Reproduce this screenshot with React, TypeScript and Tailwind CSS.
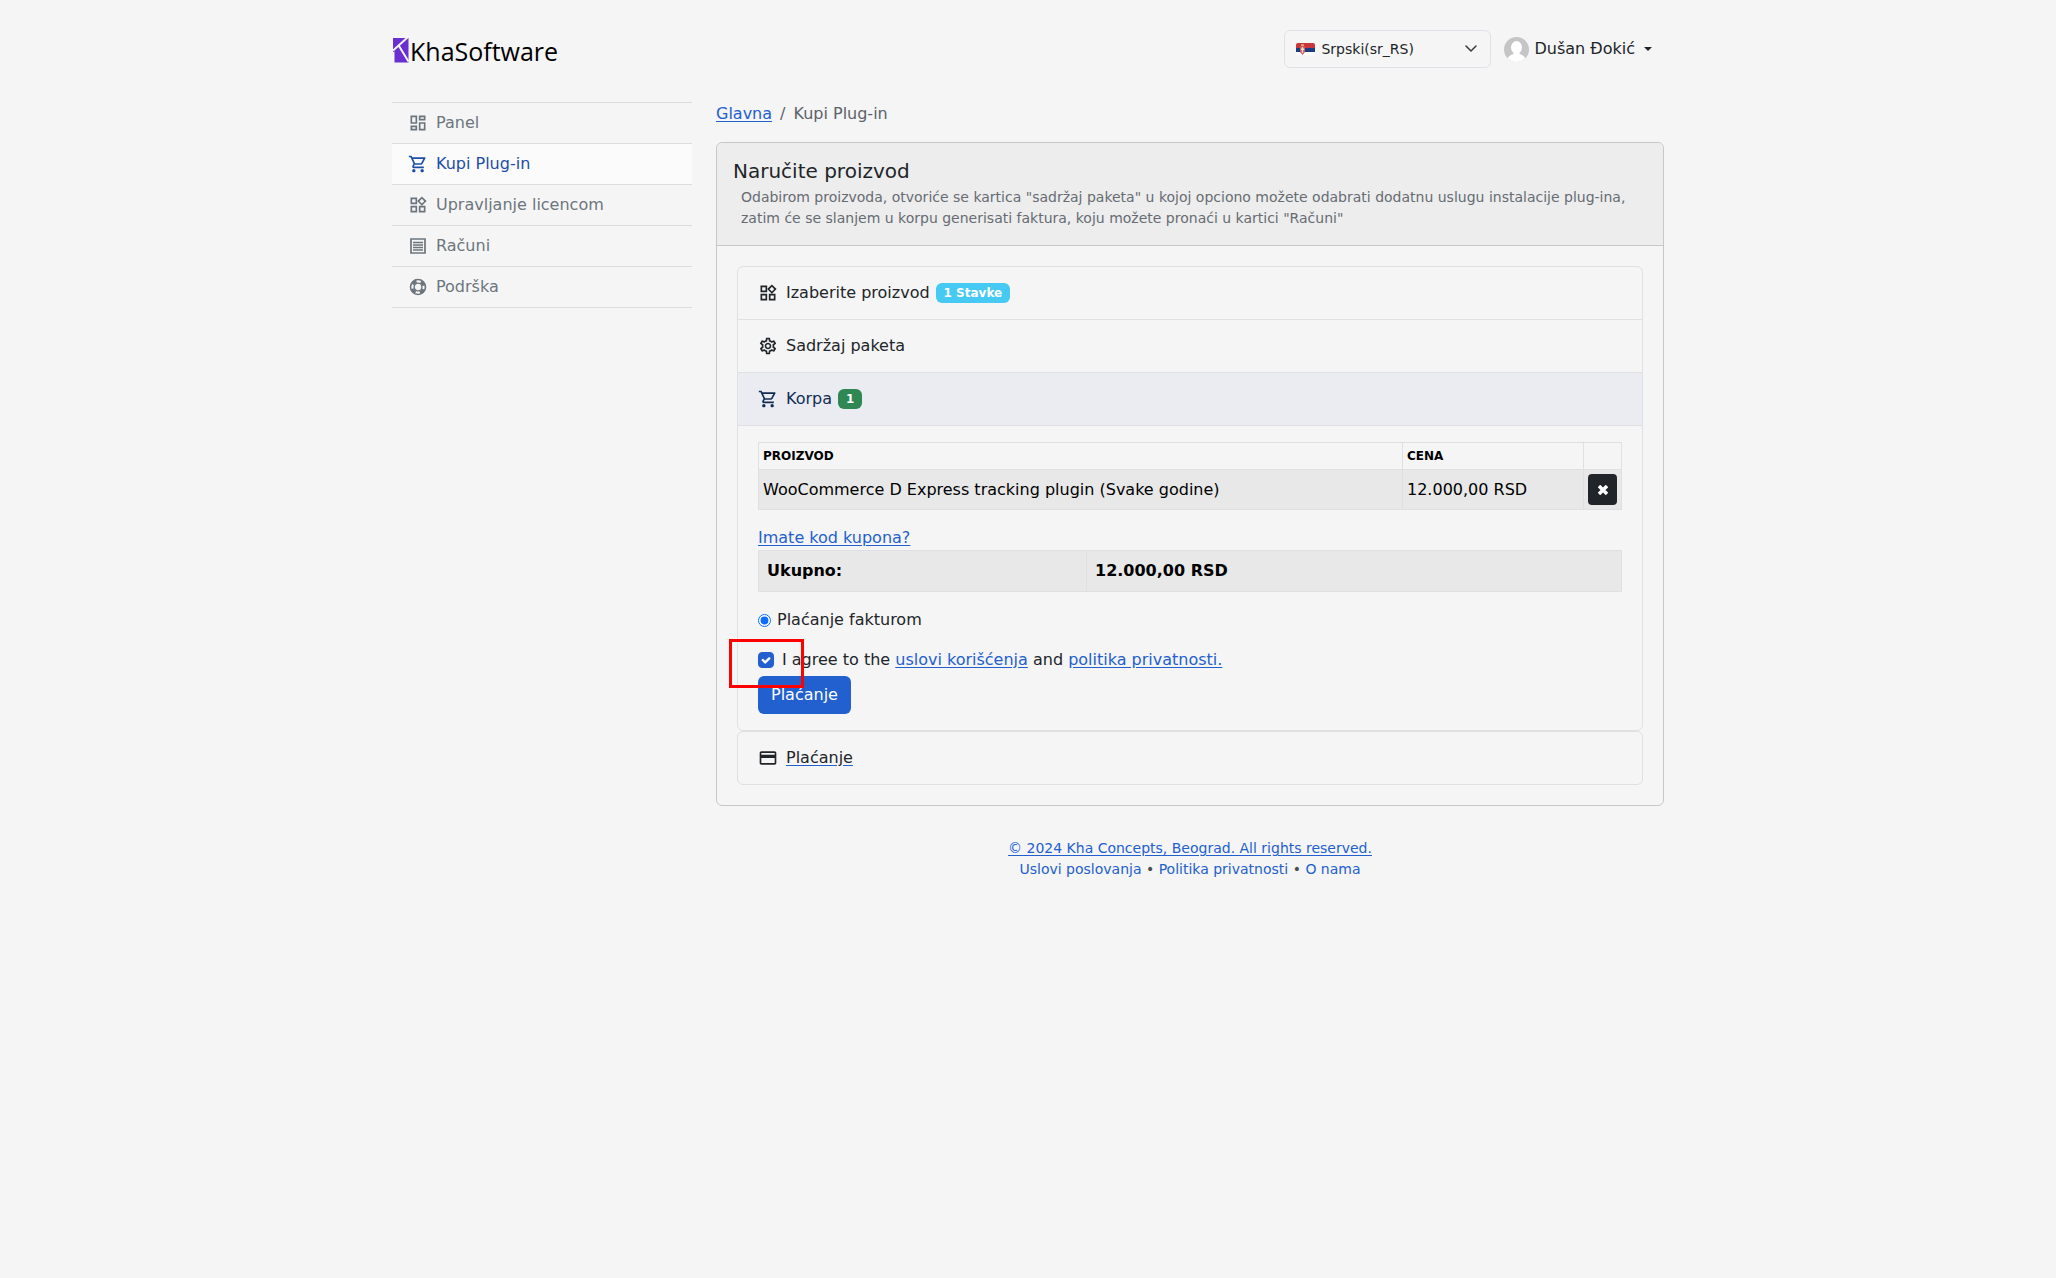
import type { ReactNode } from 'react';
import {
  MdOutlineCreditCard,
  MdOutlineDashboard,
  MdOutlineSettings,
  MdOutlineShoppingCart,
  MdOutlineWidgets,
} from 'react-icons/md';

const linkClass = 'text-[#2360cf] underline underline-offset-2';

function InvoiceIcon({ className }: { className?: string }) {
  return (
    <svg className={className} viewBox="0 0 20 20" fill="none" stroke="currentColor" aria-hidden="true">
      <path d="M3 3h14v14H3z" strokeWidth="1.7" />
      <path d="M5 6.500h10M5 9h10M5 11.500h10M5 14h10" strokeWidth="1.3" />
    </svg>
  );
}

function SupportIcon({ className }: { className?: string }) {
  return (
    <svg className={className} viewBox="0 0 20 20" fill="none" stroke="currentColor" aria-hidden="true">
      <circle cx="10" cy="10" r="7.500" strokeWidth="1.600" />
      <circle cx="10" cy="10" r="3.900" strokeWidth="1.400" />
      <circle cx="10" cy="10" r="6" strokeWidth="3.600" strokeDasharray="4.800 4.625" strokeDashoffset="-2.300" />
    </svg>
  );
}

function LogoMark() {
  return (
    <svg className="h-[25px] w-4" viewBox="0 0 16 25" aria-hidden="true">
      <path d="M0 0h15.500v24.500H1.500V13.500L0 14z" fill="#6a2fd0" />
      <path d="M14.500-.5 0 12.500M6 8l9.500 15.500" fill="none" stroke="#f5f5f5" strokeWidth="2" />
    </svg>
  );
}

function SerbianFlag() {
  return (
    <svg className="h-3 w-[19px]" viewBox="0 0 19 12" aria-hidden="true">
      <clipPath id="flag-shape">
        <rect width="19" height="12" rx="2" />
      </clipPath>
      <g clipPath="url(#flag-shape)">
        <path d="M0 0h19v5H0z" fill="#c6363c" />
        <path d="M0 5h19v4H0z" fill="#173f80" />
        <path d="M0 9h19v3H0z" fill="#fff" />
        <path d="M4 3h5v6L6.500 12 4 9z" fill="#d2545a" />
        <path d="M5.800 4h1.400v6H5.800zM4.800 5.500h3.400v1.500H4.800z" fill="#f0dcc0" />
        <path d="M5 1.200h3V3H5z" fill="#e0a868" />
      </g>
    </svg>
  );
}

const menuItems = [
  { label: 'Panel', icon: MdOutlineDashboard },
  { label: 'Kupi Plug-in', icon: MdOutlineShoppingCart, active: true },
  { label: 'Upravljanje licencom', icon: MdOutlineWidgets },
  { label: 'Računi', icon: InvoiceIcon },
  { label: 'Podrška', icon: SupportIcon },
];

function Header() {
  return (
    <header className="flex h-[102px] items-start justify-between">
      <a href="#" className="mt-[38px] flex items-center gap-px pl-px" aria-label="KhaSoftware">
        <LogoMark />
        <span className="font-['Open_Sans',sans-serif] text-[25px] leading-6 text-black">KhaSoftware</span>
      </a>

      <div className="mt-[30px] flex items-center gap-[13px] pr-3">
        <div className="relative">
          <select
            aria-label="Jezik"
            className="h-[38px] w-[207px] appearance-none rounded-md border border-[#dee2e6] bg-transparent pl-9 pr-9 text-[14px] text-[#212529]"
          >
            <option>Srpski(sr_RS)</option>
          </select>
          <span className="pointer-events-none absolute inset-y-0 left-3 flex items-center">
            <SerbianFlag />
          </span>
          <svg
            className="pointer-events-none absolute right-3 top-3 h-3 w-4"
            viewBox="0 0 16 12"
            fill="none"
            stroke="#343a40"
            strokeWidth="1.500"
            strokeLinecap="round"
            strokeLinejoin="round"
            aria-hidden="true"
          >
            <path d="m3 4 5 5 5-5" />
          </svg>
        </div>
        <button type="button" className="flex items-center gap-[5px] text-[#212529]">
          <svg className="h-[25px] w-[25px]" viewBox="0 0 25 25" aria-hidden="true">
            <clipPath id="avatar-shape">
              <circle cx="12.500" cy="12.500" r="12.500" />
            </clipPath>
            <g clipPath="url(#avatar-shape)">
              <path d="M0 0h25v25H0z" fill="#c5c5c5" />
              <ellipse cx="12.500" cy="10.500" rx="5.500" ry="6.500" fill="#fff" />
              <path d="M3 25c0-5 3-7 6.500-8v-3h6v3c3.500 1 6.500 3 6.500 8z" fill="#fff" />
            </g>
          </svg>
          <span>Dušan Đokić</span>
          <svg className="ml-1 h-1 w-2" viewBox="0 0 8 4" aria-hidden="true">
            <path d="M0 0h8L4 4z" fill="currentColor" />
          </svg>
        </button>
      </div>
    </header>
  );
}

function Sidebar() {
  return (
    <nav className="w-[300px] shrink-0" aria-label="Meni">
      <ul className="border-t border-[#dcdddf]">
        {menuItems.map(({ label, icon: Icon, active }) => (
          <li key={label} className="border-b border-[#dcdddf]">
            <a
              href="#"
              aria-current={active ? 'page' : undefined}
              className={`flex h-10 items-center gap-2 px-4 ${
                active ? 'bg-[#fbfbfb] text-[#1c4da6]' : 'text-[#6c757d]'
              }`}
            >
              <Icon className="h-5 w-5" />
              {label}
            </a>
          </li>
        ))}
      </ul>
    </nav>
  );
}

type StepProps = {
  icon: ReactNode;
  label: string;
  badge?: ReactNode;
  active?: boolean;
  underlined?: boolean;
};

function StepHeader({ icon, label, badge, active, underlined }: StepProps) {
  return (
    <h2>
      <button
        type="button"
        aria-expanded={active ?? false}
        className={`flex h-[52px] w-full items-center px-5 ${
          active ? 'bg-[#eaecf2] text-[#132c54]' : 'text-[#212529]'
        }`}
      >
        {icon}
        <span className={`ml-2 mr-[6px] ${underlined ? 'underline decoration-[#2360cf] underline-offset-2' : ''}`}>
          {label}
        </span>
        {badge}
      </button>
    </h2>
  );
}

function Cart() {
  return (
    <div className="px-5 pb-4 pt-4 text-[#212529]">
      <table className="w-full table-fixed border-collapse text-left text-black">
        <thead>
          <tr className="h-[27px] text-[12px]">
            <th className="border border-[#dee0e2] px-1">PROIZVOD</th>
            <th className="w-[181px] border border-[#dee0e2] px-1">CENA</th>
            <th className="w-[38px] border border-[#dee0e2]" aria-label="Ukloni" />
          </tr>
        </thead>
        <tbody>
          <tr className="h-10 bg-[#e8e8e8]">
            <td className="border border-[#dfe0e2] px-1">WooCommerce D Express tracking plugin (Svake godine)</td>
            <td className="border border-[#dfe0e2] px-1">12.000,00 RSD</td>
            <td className="border border-[#dfe0e2] px-1">
              <button
                type="button"
                aria-label="Ukloni proizvod"
                className="flex h-[31px] w-[29px] items-center justify-center rounded bg-[#212529] text-white"
              >
                <svg className="h-[10px] w-[10px]" viewBox="0 0 10 10" stroke="currentColor" strokeWidth="3.500" aria-hidden="true">
                  <path d="m1 1 8 8M9 1 1 9" />
                </svg>
              </button>
            </td>
          </tr>
        </tbody>
      </table>

      <a href="#" className={`mt-4 block w-fit ${linkClass}`}>
        Imate kod kupona?
      </a>
      <table className="w-full table-fixed border-collapse text-left font-bold text-black">
        <tbody>
          <tr className="h-[41px] bg-[#e8e8e8]">
            <th className="w-[328px] border border-[#dfe0e2] px-2">Ukupno:</th>
            <td className="border border-[#dfe0e2] px-2">12.000,00 RSD</td>
          </tr>
        </tbody>
      </table>

      <label className="mt-4 flex w-fit items-center gap-[6px]">
        <input type="radio" name="payment" defaultChecked className="h-[13px] w-[13px] accent-[#0d6efd]" />
        Plaćanje fakturom
      </label>

      <div className="relative mt-4 flex items-center gap-2">
        <input
          id="terms"
          type="checkbox"
          defaultChecked
          className="peer h-4 w-4 appearance-none rounded border border-[#adb5bd] checked:border-[#2360cf] checked:bg-[#2360cf]"
        />
        <svg
          className="pointer-events-none absolute left-0 top-1 hidden h-4 w-4 peer-checked:block"
          viewBox="0 0 20 20"
          fill="none"
          stroke="#fff"
          strokeWidth="3"
          strokeLinecap="round"
          strokeLinejoin="round"
          aria-hidden="true"
        >
          <path d="m6 10 3 3 5-5" />
        </svg>
        <p>
          <label htmlFor="terms">I agree to the </label>
          <a href="#" className={linkClass}>uslovi korišćenja</a> and{' '}
          <a href="#" className={linkClass}>politika privatnosti.</a>
        </p>
        <span className="pointer-events-none absolute -left-[29px] -top-[9px] z-10 h-[49px] w-[75px] border-[3px] border-[#ff0000]" />
      </div>

      <button type="button" className="mt-1 h-[38px] rounded-md bg-[#2360cf] px-[13px] text-white">
        Plaćanje
      </button>
    </div>
  );
}

function OrderCard() {
  return (
    <section className="mt-4 rounded-md border border-[#c6c7c8]">
      <div className="rounded-t-md border-b border-[#c6c7c8] bg-[#ededed] px-4 pb-4 pt-4">
        <h1 className="pb-1 text-[20px] leading-6 text-[#212529]">Naručite proizvod</h1>
        <p className="pl-2 text-[14px] leading-[21px] text-[#666c72]">
          Odabirom proizvoda, otvoriće se kartica "sadržaj paketa" u kojoj opciono možete odabrati dodatnu uslugu
          instalacije plug-ina, zatim će se slanjem u korpu generisati faktura, koju možete pronaći u kartici "Računi"
        </p>
      </div>

      <div className="p-5">
        <div className="divide-y divide-[#dee0e2] rounded-md border border-[#dee0e2]">
          <StepHeader
            icon={<MdOutlineWidgets className="h-5 w-5" />}
            label="Izaberite proizvod"
            badge={
              <span className="flex h-5 items-center rounded-md bg-[#46c9f2] px-2 text-[12px] font-bold text-white">
                1 Stavke
              </span>
            }
          />
          <StepHeader icon={<MdOutlineSettings className="h-5 w-5" />} label="Sadržaj paketa" />
          <StepHeader
            active
            icon={<MdOutlineShoppingCart className="h-5 w-5" />}
            label="Korpa"
            badge={
              <span className="flex h-5 items-center rounded-md bg-[#2f8753] px-2 text-[12px] font-bold text-white">
                1
              </span>
            }
          />
          <Cart />
        </div>
        <div className="rounded-md border border-[#dee0e2]">
          <StepHeader icon={<MdOutlineCreditCard className="h-5 w-5" />} label="Plaćanje" underlined />
        </div>
      </div>
    </section>
  );
}

export default function App() {
  return (
    <div className="min-h-screen bg-[#f5f5f5] font-['Verdana','DejaVu_Sans',sans-serif] text-[16px] leading-6">
      <div className="mx-auto max-w-[1320px] px-6">
        <Header />
        <div className="flex items-start gap-6">
          <Sidebar />
          <main className="min-w-0 flex-1">
            <nav aria-label="Breadcrumb">
              <ol className="flex gap-2 text-[#5c6268]">
                <li>
                  <a href="#" className={linkClass}>Glavna</a>
                </li>
                <li aria-hidden="true">/</li>
                <li aria-current="page">Kupi Plug-in</li>
              </ol>
            </nav>
            <OrderCard />
            <footer className="mt-8 text-center text-[14px] leading-[21px] text-[#4a4f54]">
              <a href="#" className={linkClass}>© 2024 Kha Concepts, Beograd. All rights reserved.</a>
              <p>
                <a href="#" className="text-[#2360cf]">Uslovi poslovanja</a> •{' '}
                <a href="#" className="text-[#2360cf]">Politika privatnosti</a> •{' '}
                <a href="#" className="text-[#2360cf]">O nama</a>
              </p>
            </footer>
          </main>
        </div>
      </div>
    </div>
  );
}
